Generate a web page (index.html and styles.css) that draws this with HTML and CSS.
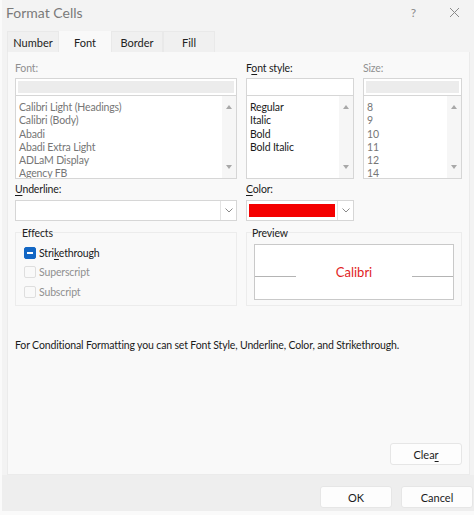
FILE: index.html
```html
<!DOCTYPE html>
<html lang="en">
<head>
<meta charset="utf-8">
<title>Format Cells</title>
<link rel="stylesheet" href="styles.css">
</head>
<body>
<div class="dialog">
  <div class="titlebar">
    <span class="title">Format Cells</span>
    <div class="title-btns">
      <span class="tb-help">?</span>
      <svg class="tb-close" width="11" height="11" viewBox="0 0 11 11"><path d="M1 1 L10 10 M10 1 L1 10" stroke="#8a8a8a" stroke-width="1" fill="none"/></svg>
    </div>
  </div>
  <div class="tabs">
    <div class="tab">Number</div>
    <div class="tab active">Font</div>
    <div class="tab">Border</div>
    <div class="tab">Fill</div>
  </div>
  <div class="panel">
    <div class="grid">
      <div class="col">
        <div class="label dis">Font:</div>
        <div class="input dis-field"><div class="fill"></div></div>
        <div class="list">
          <div class="items dis-text">
            <div>Calibri Light (Headings)</div>
            <div>Calibri (Body)</div>
            <div>Abadi</div>
            <div>Abadi Extra Light</div>
            <div>ADLaM Display</div>
            <div>Agency FB</div>
          </div>
          <div class="scroll"><span class="up"></span><span class="down"></span></div>
        </div>
      </div>
      <div class="col">
        <div class="label">F<u>o</u>nt style:</div>
        <div class="input"></div>
        <div class="list">
          <div class="items">
            <div>Regular</div>
            <div>Italic</div>
            <div>Bold</div>
            <div>Bold Italic</div>
          </div>
          <div class="scroll"><span class="up"></span><span class="down"></span></div>
        </div>
      </div>
      <div class="col">
        <div class="label dis">Size:</div>
        <div class="input dis-field"><div class="fill"></div></div>
        <div class="list">
          <div class="items dis-text">
            <div>8</div>
            <div>9</div>
            <div>10</div>
            <div>11</div>
            <div>12</div>
            <div>14</div>
          </div>
          <div class="scroll"><span class="up"></span><span class="down"></span></div>
        </div>
      </div>
    </div>

    <div class="row2">
      <div class="col-wide">
        <div class="label"><u>U</u>nderline:</div>
        <div class="combo">
          <div class="combo-main"></div>
          <div class="combo-arrow"><svg width="8" height="5" viewBox="0 0 8 5"><path d="M0.5 0.5 L4 4 L7.5 0.5" stroke="#8a8a8a" fill="none"/></svg></div>
        </div>
      </div>
      <div class="col-mid">
        <div class="label"><u>C</u>olor:</div>
        <div class="combo">
          <div class="combo-main"><div class="swatch"></div></div>
          <div class="combo-arrow"><svg width="8" height="5" viewBox="0 0 8 5"><path d="M0.5 0.5 L4 4 L7.5 0.5" stroke="#8a8a8a" fill="none"/></svg></div>
        </div>
      </div>
    </div>

    <div class="row3">
      <div class="group effects">
        <div class="group-title">Effects</div>
        <div class="check on first"><span class="box"><span class="dash"></span></span><span>Stri<u>k</u>ethrough</span></div>
        <div class="check off"><span class="box"></span><span>Superscript</span></div>
        <div class="check off"><span class="box"></span><span>Subscript</span></div>
      </div>
      <div class="group preview">
        <div class="group-title">Preview</div>
        <div class="preview-box">
          <span class="pline"></span>
          <span class="sample">Calibri</span>
          <span class="pline"></span>
        </div>
      </div>
    </div>

    <p class="note">For Conditional Formatting you can set Font Style, Underline, Color, and Strikethrough.</p>

    <div class="clear-row"><button class="btn">Clea<u>r</u></button></div>
  </div>
  <div class="footer">
    <button class="btn">OK</button>
    <button class="btn">Cancel</button>
  </div>
</div>
</body>
</html>
```

FILE: styles.css
```css
* { box-sizing: border-box; }
html, body { margin: 0; padding: 0; }
body {
  background: #fbfbfb;
  font-family: Lato, "Noto Sans", sans-serif;
  font-size: 10.5px;
  letter-spacing: -0.15px;
  color: #1b1b1b;
}
u { text-decoration-thickness: 1px; text-underline-offset: 2px; }
.dialog {
  width: 474px;
  height: 515px;
  background: #f3f3f3;
  display: flex;
  flex-direction: column;
  border-left: 2px solid #fafafa;
  border-bottom: 4px solid #fafafa;
}
.titlebar {
  height: 25px;
  display: flex;
  align-items: center;
  justify-content: space-between;
  padding: 0 14px 0 4px;
}
.title { font-size: 14px; letter-spacing: 0; color: #7a7a7a; }
.title-btns { display: flex; align-items: center; gap: 33px; }
.tb-help { font-size: 12px; color: #8a8a8a; }
.tabs {
  display: flex;
  margin-left: 5px;
  margin-top: 6px;
  height: 21px;
}
.tab {
  width: 52px;
  display: flex;
  align-items: center;
  justify-content: center;
  background: #f0f0f0;
  border: 1px solid #e9e9e9;
  border-bottom: none;
  color: #222;
  font-size: 11px;
  letter-spacing: 0;
}
.tab.active { background: #f9f9f9; border-color: #f9f9f9; }
.panel {
  margin-left: 5px;
  width: 463px;
  height: 423px;
  background: #f9f9f9;
  border: 1px solid #ebebeb;
  border-top: none;
  padding: 9px 7px 0 7px;
  display: flex;
  flex-direction: column;
}
.grid {
  display: grid;
  grid-template-columns: 222px 108px 99px;
  column-gap: 9px;
}
.label { height: 14px; line-height: 14px; margin-bottom: 3px; }
.dis { color: #909090; }
.dis-text { color: #767676; }
.input {
  height: 18px;
  background: #fff;
  border: 1px solid #d6d6d6;
}
.dis-field { padding: 2px; }
.dis-field .fill { background: #ececec; height: 100%; }
.list {
  height: 83px;
  background: #fff;
  border: 1px solid #d6d6d6;
  border-top: none;
  display: flex;
  overflow: hidden;
}
.items { flex: 1; padding: 5px 0 0 3px; line-height: 13.3px; }
.scroll {
  width: 14px;
  background: #f6f6f6;
  display: flex;
  flex-direction: column;
  align-items: center;
  justify-content: space-between;
  padding: 9px 0 9px;
}
.up, .down {
  width: 0; height: 0;
  border-left: 3px solid transparent;
  border-right: 3px solid transparent;
}
.up { border-bottom: 4px solid #a8a8a8; }
.down { border-top: 4px solid #a8a8a8; }

.row2 { display: flex; gap: 9px; margin-top: 3px; }
.col-wide { width: 222px; }
.col-mid { width: 108px; }
.row2 .label { margin-bottom: 4px; }
.combo {
  height: 21px;
  display: flex;
  background: #fff;
  border: 1px solid #d6d6d6;
}
.combo-main { flex: 1; padding: 3px 2px 3px 2px; }
.swatch { width: 86px; height: 13px; background: #f40000; }
.combo-arrow {
  width: 16px;
  border-left: 1px solid #e3e3e3;
  display: flex;
  align-items: center;
  justify-content: center;
}
.row3 { display: flex; gap: 9px; margin-top: 11px; }
.group {
  border: 1px solid #ececec;
  height: 74px;
}
.effects { width: 222px; padding: 0 0 0 8px; }
.preview { width: 216px; padding: 0 7px; }
.group-title { line-height: 14px; margin-top: -7px; margin-left: -2px; color: #222; }
.check {
  display: flex;
  align-items: center;
  gap: 3px;
  height: 19.5px;
}
.check.first { margin-top: 3px; }
.box {
  width: 12px; height: 12px;
  border-radius: 2px;
  border: 1px solid #dedede;
  background: #f9f9f9;
  display: flex;
  align-items: center;
  justify-content: center;
}
.on .box { background: #1367c4; border-color: #1367c4; }
.dash { width: 6px; height: 1.5px; background: #fff; }
.off { color: #909090; }
.preview-box {
  margin-top: 4px;
  height: 56px;
  background: #fff;
  border: 1px solid #c9c9c9;
  display: flex;
  align-items: center;
}
.pline { width: 41px; height: 1px; background: #b4b4b4; margin-top: 8px; }
.sample { flex: 1; text-align: center; color: #e11d1d; font-size: 13px; letter-spacing: 0; }
.note { margin: 32px 0 0 0; line-height: 14px; color: #1b1b1b; }
.clear-row { display: flex; justify-content: flex-end; margin-top: 91px; }
.btn {
  width: 72px;
  height: 22px;
  background: #fdfdfd;
  border: 1px solid #e6e6e6;
  border-radius: 3px;
  font-family: inherit;
  font-size: 11px;
  letter-spacing: 0;
  color: #1b1b1b;
  padding: 0;
}
.footer {
  flex: 1;
  background: #eeeeee;
  display: flex;
  justify-content: flex-end;
  align-items: flex-start;
  gap: 9px;
  padding-right: 1px;
  padding-top: 11px;
}
```
